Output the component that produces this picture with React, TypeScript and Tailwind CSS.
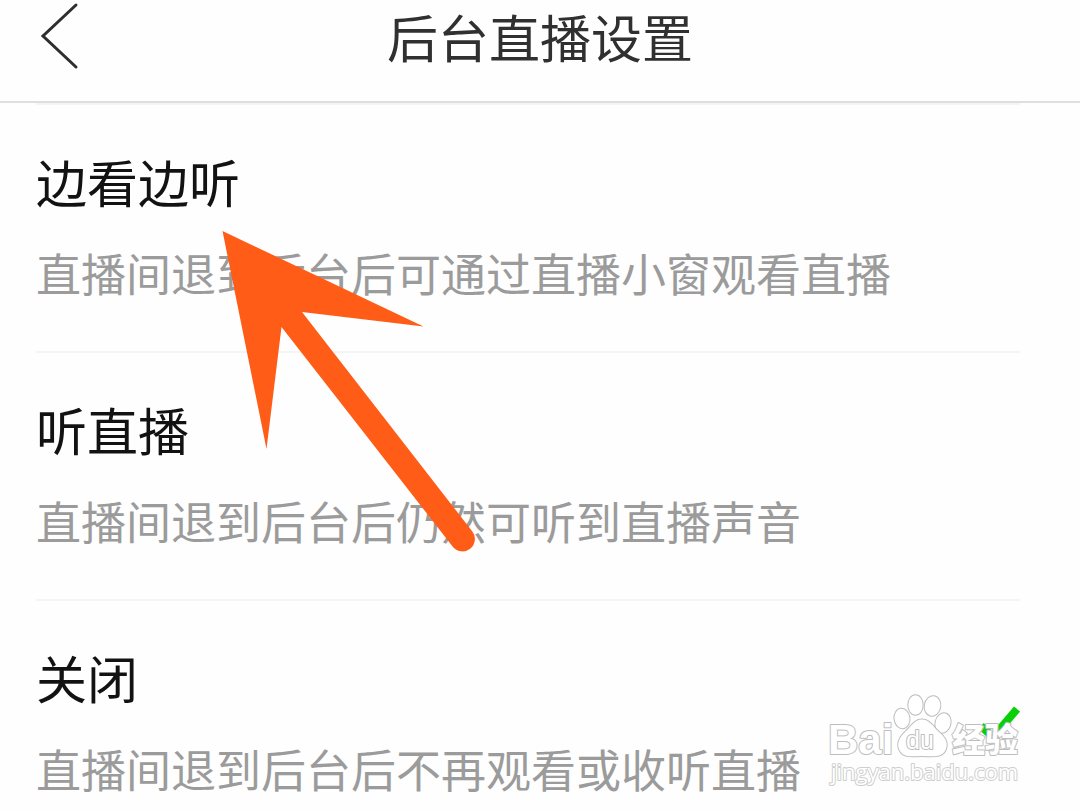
const options = [
  { id: "watch", label: "边看边听", description: "直播间退到后台后可通过直播小窗观看直播" },
  { id: "listen", label: "听直播", description: "直播间退到后台后仍然可听到直播声音" },
  { id: "off", label: "关闭", description: "直播间退到后台后不再观看或收听直播" },
];

const Header = () => (
  <header className="relative flex h-[103px] items-start justify-center border-b-2 border-[#dfdfdf] pt-1.5">
    <button type="button" aria-label="返回" className="absolute left-9 top-0 h-[76px] w-12">
      <svg viewBox="0 0 48 76" className="h-full w-full" fill="none" stroke="#2e2e2e" strokeWidth="3" strokeLinecap="round">
        <path d="M40 5 L7 36 L40 67" />
      </svg>
    </button>
    <h1 className="text-[51px] leading-[60px] text-[#303030]">后台直播设置</h1>
  </header>
);

const Arrow = () => (
  <svg
    className="pointer-events-none absolute left-[220px] top-[228px] h-[324px] w-[260px]"
    viewBox="220 228 260 324"
    fill="#ff5d17"
    aria-hidden="true"
  >
    <path d="M222.5 231 L423.5 326.5 L302 312 L472 531 A12.3 12.3 0 0 1 453 547 L281.5 327 L266.5 449 Z" />
  </svg>
);

const Watermark = () => (
  <svg
    className="pointer-events-none absolute right-[54px] top-[690px] h-[104px] w-[200px]"
    viewBox="826 690 200 104"
    aria-label="Baidu 经验"
    fill="#fff"
    stroke="#bdbdbd"
    strokeLinejoin="round"
    style={{ paintOrder: "stroke" }}
  >
    <g strokeWidth="2">
      <ellipse cx="902" cy="718.5" rx="7.5" ry="9.8" transform="rotate(-8 902 718.5)" />
      <ellipse cx="915.5" cy="705" rx="7.2" ry="9.8" />
      <ellipse cx="932.5" cy="706" rx="7.8" ry="9.8" transform="rotate(10 932.5 706)" />
      <ellipse cx="943" cy="723" rx="7.5" ry="9.8" transform="rotate(14 943 723)" />
      <path d="M922 719.5 C930 719.5 933 727 939 732 C946 738 949 744 945 751 C941 758 932 756 922 756 C912 756 904 758 900 751 C896 744 899 738 905 732 C911 727 914 719.5 922 719.5 Z" />
    </g>
    <g fontFamily="Liberation Sans, Arial, sans-serif" fontWeight="bold" strokeWidth="2">
      <text x="828" y="754" fontSize="42">Bai</text>
      <text x="906" y="749" fontSize="25" fontWeight="normal">du</text>
    </g>
    <text x="952" y="752" strokeWidth="2" fontFamily="Noto Sans CJK SC, sans-serif" fontWeight="900" fontSize="33">
      经验
    </text>
    <text x="831" y="780" stroke="#cecece" strokeWidth="2" fontFamily="Open Sans, sans-serif" fontWeight="500" fontSize="22">
      jingyan.baidu.com
    </text>
  </svg>
);

export default function App() {
  return (
    <div className="relative min-h-screen overflow-hidden bg-[#fefefe] font-['Noto_Sans_CJK_SC',sans-serif]">
      <Header />
      <main className="ml-9 mr-[60px] border-t-2 border-[#f4f4f4]">
        {options.map((option) => (
          <label
            key={option.id}
            className="flex items-center justify-between border-b-2 border-[#f4f4f4] pb-12 pt-[46px] last:border-0 last:pb-1"
          >
            <span className="flex flex-col gap-8">
              <span className="text-[51px] leading-[60px] text-[#121212]">{option.label}</span>
              <span className="text-[45px] leading-[60px] text-[#9b9b9b]">{option.description}</span>
            </span>
            <input type="radio" name="background-play" className="peer sr-only" defaultChecked={option.id === "off"} />
            <svg
              viewBox="0 0 42 40"
              className="hidden h-10 w-[42px] shrink-0 peer-checked:block"
              fill="none"
              stroke="#08cf08"
              strokeWidth="8"
              aria-hidden="true"
            >
              <path d="M3 23 L15 34 L39 6" />
            </svg>
          </label>
        ))}
      </main>
      <Arrow />
      <Watermark />
    </div>
  );
}
